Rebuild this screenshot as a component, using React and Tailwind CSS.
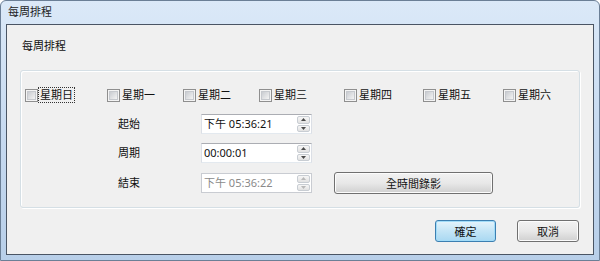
import React from "react";

const days = [
  { label: "星期日", w: "w-[82px]", focus: true },
  { label: "星期一", w: "w-[76px]" },
  { label: "星期二", w: "w-[76px]" },
  { label: "星期三", w: "w-[85px]" },
  { label: "星期四", w: "w-[79px]" },
  { label: "星期五", w: "w-[80px]" },
  { label: "星期六", w: "w-[60px]" },
];

function CheckBox({ label, focus }) {
  return (
    <label className="flex items-center gap-[1px]">
      <span className="w-[13px] h-[13px] border border-[#8f8f8f] bg-[#f4f4f4] p-[1px] shrink-0">
        <span className="block w-full h-full border border-[#c6c9ce] bg-gradient-to-br from-[#c9ccd1] to-[#f4f4f4]" />
      </span>
      <span
        className={
          "px-[1px] leading-[14px] " +
          (focus ? "outline outline-1 outline-dotted outline-[#333]" : "")
        }
      >
        {label}
      </span>
    </label>
  );
}

function Spinner({ disabled }) {
  const arrow = disabled ? "#b8b8b8" : "#4a4a4a";
  return (
    <div className="flex flex-col w-[14px] h-full gap-[1px] py-[1px] pr-[1px]">
      <div className="flex-1 flex items-center justify-center border border-[#c8cdd3] rounded-[2px] bg-gradient-to-b from-[#f6f6f6] to-[#e2e2e2]">
        <svg width="5" height="3" viewBox="0 0 5 3">
          <path d="M0 3 L2.5 0 L5 3 Z" fill={arrow} />
        </svg>
      </div>
      <div className="flex-1 flex items-center justify-center border border-[#c8cdd3] rounded-[2px] bg-gradient-to-b from-[#f6f6f6] to-[#e2e2e2]">
        <svg width="5" height="3" viewBox="0 0 5 3">
          <path d="M0 0 L2.5 3 L5 0 Z" fill={arrow} />
        </svg>
      </div>
    </div>
  );
}

function TimeField({ value, disabled }) {
  return (
    <div
      className={
        "flex w-[111px] h-[20px] bg-white border " +
        (disabled
          ? "border-[#c9ccd2]"
          : "border-[#abadb3] border-l-[#dbdfe6] border-r-[#dbdfe6] border-b-[#e3e9ef]")
      }
    >
      <div
        className={
          "flex-1 pl-[2px] leading-[18px] " +
          (disabled ? "text-[#8a8a8a]" : "text-[#111]")
        }
      >
        {value}
      </div>
      <Spinner disabled={disabled} />
    </div>
  );
}

function WinButton({ children, primary, className }) {
  return (
    <button
      className={
        "h-[22px] rounded-[3px] border leading-none " +
        (primary
          ? "border-[#3c7fb1] bg-gradient-to-b from-[#e5f4fc] via-[#c4e5f6] to-[#a9d8f2] shadow-[inset_0_0_0_1px_#a2dcf8] "
          : "border-[#707070] bg-gradient-to-b from-[#f2f2f2] via-[#e8e8e8] to-[#d0d0d0] shadow-[inset_0_0_0_1px_#fcfcfc] ") +
        className
      }
    >
      {children}
    </button>
  );
}

export default function App() {
  return (
    <div
      className="w-[600px] h-[261px] rounded-t-[6px] border border-[#6b7f96] bg-gradient-to-b from-[#dbe9f8] via-[#c7daf0] to-[#b8cfe9] px-[5px] pb-[5px] flex flex-col text-[11px] text-[#111]"
      style={{ fontFamily: '"Noto Sans", "Noto Sans CJK TC", sans-serif' }}
    >
      <div className="h-[23px] flex items-center pl-[2px] text-[#1e1e1e]">
        每周排程
      </div>

      <div className="flex-1 border border-[#4a5564] bg-[#f0f0f0] flex flex-col px-[13px]">
        <div className="h-[45px] flex items-center pl-[2px] pb-[2px]">每周排程</div>

        <div className="h-[138px] rounded-[3px] border border-[#d5dfe5] shadow-[inset_1px_1px_0_#ffffff,1px_1px_0_#ffffff] flex flex-col">
          <div className="flex items-center pl-[4px] pt-[15px] h-[33px]">
            {days.map((d) => (
              <div key={d.label} className={d.w + " shrink-0"}>
                <CheckBox label={d.label} focus={d.focus} />
              </div>
            ))}
          </div>

          <div className="flex flex-col gap-[9px] pl-[97px] pt-[10px]">
            <div className="flex items-center">
              <span className="w-[83px]">起始</span>
              <TimeField value="下午 05:36:21" />
            </div>
            <div className="flex items-center">
              <span className="w-[83px]">周期</span>
              <TimeField value="00:00:01" />
            </div>
            <div className="flex items-center">
              <span className="w-[83px]">結束</span>
              <TimeField value="下午 05:36:22" disabled />
              <WinButton className="ml-[22px] w-[159px]">全時間錄影</WinButton>
            </div>
          </div>
        </div>

        <div className="flex justify-end pt-[12px] pr-[1px]">
          <WinButton primary className="w-[61px]">確定</WinButton>
          <WinButton className="w-[62px] ml-[21px]">取消</WinButton>
        </div>
      </div>
    </div>
  );
}
